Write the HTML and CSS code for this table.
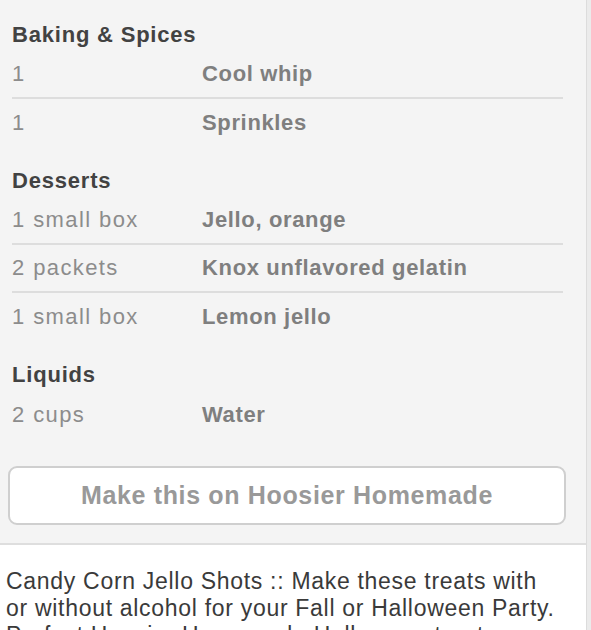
FILE: index.html
```html
<!DOCTYPE html>
<html lang="en">

<head>
  <meta charset="UTF-8" />
  <meta name="viewport" content="width=device-width, initial-scale=1" />
  <title>Candy Corn Jello Shots</title>
  <link rel="stylesheet" href="styles.css">
</head>

<body>
  <div class="page">
    <div class="ingredients">
      <div class="group">
        <h3>Baking &amp; Spices</h3>
        <div class="row"><span class="qty">1</span><span class="name">Cool whip</span></div>
        <div class="row"><span class="qty">1</span><span class="name">Sprinkles</span></div>
      </div>

      <div class="group">
        <h3>Desserts</h3>
        <div class="row"><span class="qty">1 small box</span><span class="name">Jello, orange</span></div>
        <div class="row"><span class="qty">2 packets</span><span class="name">Knox unflavored gelatin</span></div>
        <div class="row"><span class="qty">1 small box</span><span class="name">Lemon jello</span></div>
      </div>

      <div class="group">
        <h3>Liquids</h3>
        <div class="row"><span class="qty">2 cups</span><span class="name">Water</span></div>
      </div>

      <a class="make-btn" href="#">Make this on Hoosier Homemade</a>
    </div>

    <p class="description">
      Candy Corn Jello Shots :: Make these treats with or without alcohol for your Fall or Halloween Party.
      Perfect Hoosier Homemade Halloween treats #Recipes
    </p>
  </div>
</body>

</html>
```

FILE: styles.css
```css
* {
  margin: 0;
  padding: 0;
  box-sizing: border-box;
  font-family: "Liberation Sans", Arial, sans-serif;
}

html,
body {
  height: 100%;
  overflow: hidden;
}

body {
  background: #ebebeb;
}

/* main column, with a thin gray gutter on the right */
.page {
  width: 587px;
  min-height: 100%;
  background: #fff;
  border-right: 1px solid #dcdcdc;
}

.ingredients {
  background: #f4f4f4;
  padding: 1px 20px 18px 8px;
  border-bottom: 2px solid #dedede;
}

.group {
  margin: 18px 3px 0 4px;
}

.group h3 {
  font-size: 22px;
  line-height: 32px;
  font-weight: 700;
  letter-spacing: 0.8px;
  color: #424242;
}

.row {
  display: flex;
  align-items: center;
  height: 48px;
  font-size: 22px;
  border-bottom: 2px solid #dddddd;
}

.row:last-child {
  border-bottom: none;
}

.row .qty {
  width: 190px;
  color: #8c8c8c;
  letter-spacing: 1.4px;
}

.row .name {
  font-weight: 700;
  color: #7f7f7f;
  letter-spacing: 0.65px;
}

.make-btn {
  display: block;
  margin-top: 27px;
  height: 59px;
  line-height: 55px;
  text-align: center;
  background: #fff;
  border: 2px solid #cfcfcf;
  border-radius: 9px;
  color: #999;
  font-size: 25px;
  font-weight: 700;
  letter-spacing: 0.65px;
  text-decoration: none;
}

.description {
  padding: 23px 24px 0 6px;
  font-size: 23px;
  line-height: 27px;
  letter-spacing: 0.7px;
  color: #3a3a3a;
}
```
